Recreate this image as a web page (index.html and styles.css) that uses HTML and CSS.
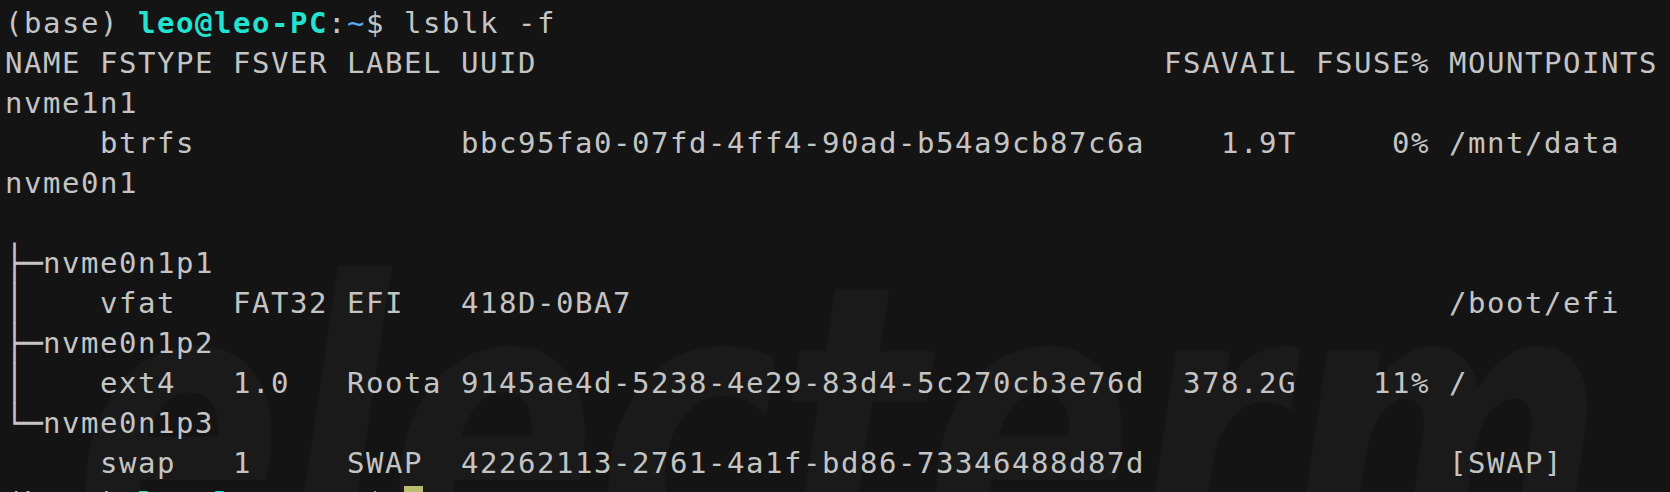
FILE: index.html
```html
<!DOCTYPE html>
<html lang="en">
<head>
<meta charset="utf-8">
<title>Terminal - lsblk -f</title>
<link rel="stylesheet" href="styles.css">
</head>
<body>
<main class="terminal">
<svg class="watermark" width="1670" height="492" viewBox="0 0 1670 492" aria-hidden="true">
<text x="75" y="570" textLength="1530" lengthAdjust="spacingAndGlyphs">electerm</text>
</svg>
<pre class="screen"><span class="dim">(base) </span><span class="user">leo@leo-PC</span>:<span class="path">~</span>$ lsblk -f
NAME FSTYPE FSVER LABEL UUID                                 FSAVAIL FSUSE% MOUNTPOINTS
nvme1n1
     btrfs              bbc95fa0-07fd-4ff4-90ad-b54a9cb87c6a    1.9T     0% /mnt/data
nvme0n1

<span class="tree">├─</span>nvme0n1p1
<span class="tree">│ </span>   vfat   FAT32 EFI   418D-0BA7                                           /boot/efi
<span class="tree">├─</span>nvme0n1p2
<span class="tree">│ </span>   ext4   1.0   Roota 9145ae4d-5238-4e29-83d4-5c270cb3e76d  378.2G    11% /
<span class="tree">└─</span>nvme0n1p3
     swap   1     SWAP  42262113-2761-4a1f-bd86-73346488d87d                [SWAP]
<span class="dim">(base) </span><span class="user">leo@leo-PC</span>:<span class="path">~</span>$ <span class="cursor"> </span></pre>
</main>
</body>
</html>
```

FILE: styles.css
```css
html, body {
  margin: 0;
  padding: 0;
  background: #141414;
  overflow: hidden;
}

.terminal {
  position: relative;
  width: 1670px;
  height: 492px;
  overflow: hidden;
  background: #141414;
}

.watermark {
  position: absolute;
  left: 0;
  top: 0;
  z-index: 0;
}

.watermark text {
  font-family: "DejaVu Sans", sans-serif;
  font-weight: bold;
  font-style: italic;
  font-size: 400px;
  fill: #1a1a1a;
}

.screen {
  position: relative;
  z-index: 1;
  margin: 0;
  padding: 3px 0 0 5px;
  font-family: "DejaVu Sans Mono", "Liberation Mono", monospace;
  font-size: 29px;
  letter-spacing: 1.54px;
  line-height: 40px;
  color: #c4c4c4;
  white-space: pre;
}

.dim {
  color: #c4c4c4;
}

.user {
  color: #22e3cf;
  font-weight: bold;
}

.path {
  color: #5eaaf2;
}

.tree {
  display: inline-block;
  width: 38px;
  letter-spacing: 0;
  transform: scale(1.09, 1.2);
  transform-origin: left center;
}

.cursor {
  background: #b9bd6c;
}
```
